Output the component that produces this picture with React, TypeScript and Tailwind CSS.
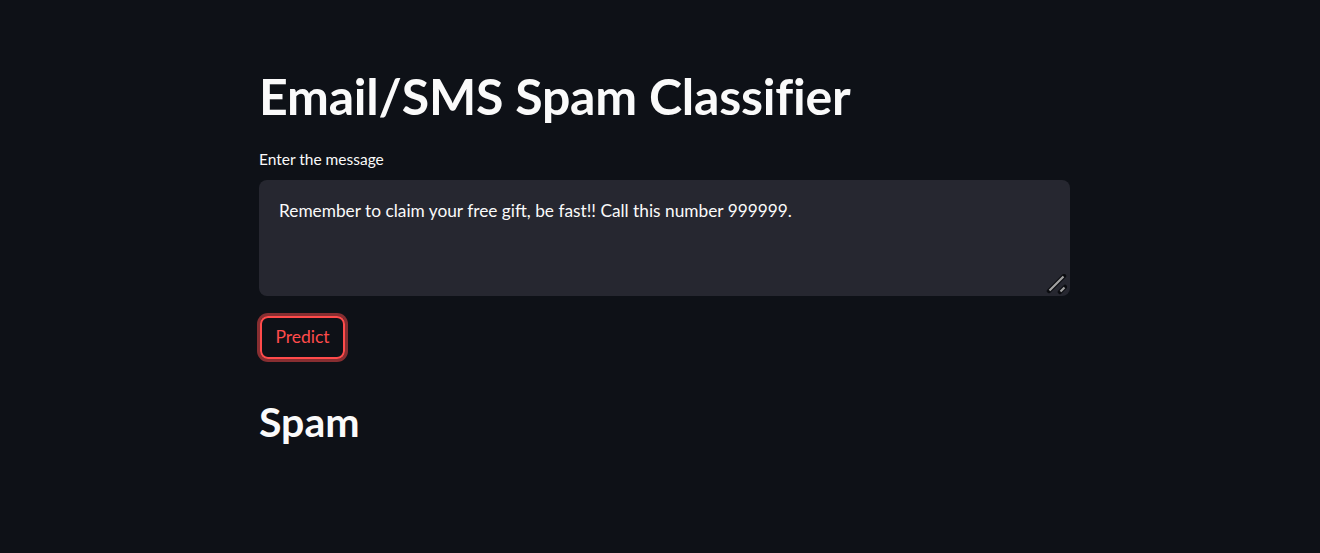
export default function App() {
  return (
    <div className="min-h-[553px] w-full bg-[#0e1117] text-[#fafafa] font-['Lato','Noto_Sans',sans-serif]">
      <div className="pl-[259px] pr-[250px] pt-[64px]">
        <h1 className="text-[50px] font-bold leading-[64px] tracking-[-0.2px]">
          Email/SMS Spam Classifier
        </h1>
        <label className="mt-[21px] block text-[15.5px] leading-[20px]">Enter the message</label>
        <div className="relative mt-[11px] h-[116px] rounded-lg bg-[#262730] px-5 pt-[19px]">
          <p className="text-[17.3px] leading-6">
            Remember to claim your free gift, be fast!! Call this number 999999.
          </p>
          <svg className="absolute bottom-[1px] right-[3px]" width="21" height="21" viewBox="0 0 21 21">
            <line x1="3" y1="17" x2="18" y2="2" stroke="#0b0c10" strokeWidth="4.5" strokeLinecap="round" />
            <line x1="3.5" y1="16.5" x2="17.5" y2="2.5" stroke="#a3a3a3" strokeWidth="2.2" />
            <line x1="14" y1="18" x2="19" y2="13" stroke="#0b0c10" strokeWidth="4.5" strokeLinecap="round" />
            <line x1="14.5" y1="17.5" x2="18.5" y2="13.5" stroke="#a3a3a3" strokeWidth="2.2" />
          </svg>
        </div>
        <button className="mt-[20px] ml-[1px] h-[43px] w-[85px] rounded-lg border-2 border-[#ff4b4b] text-[17.5px] text-[#ff4b4b] outline-none ring-[3px] ring-[#ff4b4b]/50">
          Predict
        </button>
        <h2 className="mt-[39px] text-[41px] font-bold leading-[48px]">Spam</h2>
      </div>
    </div>
  );
}
